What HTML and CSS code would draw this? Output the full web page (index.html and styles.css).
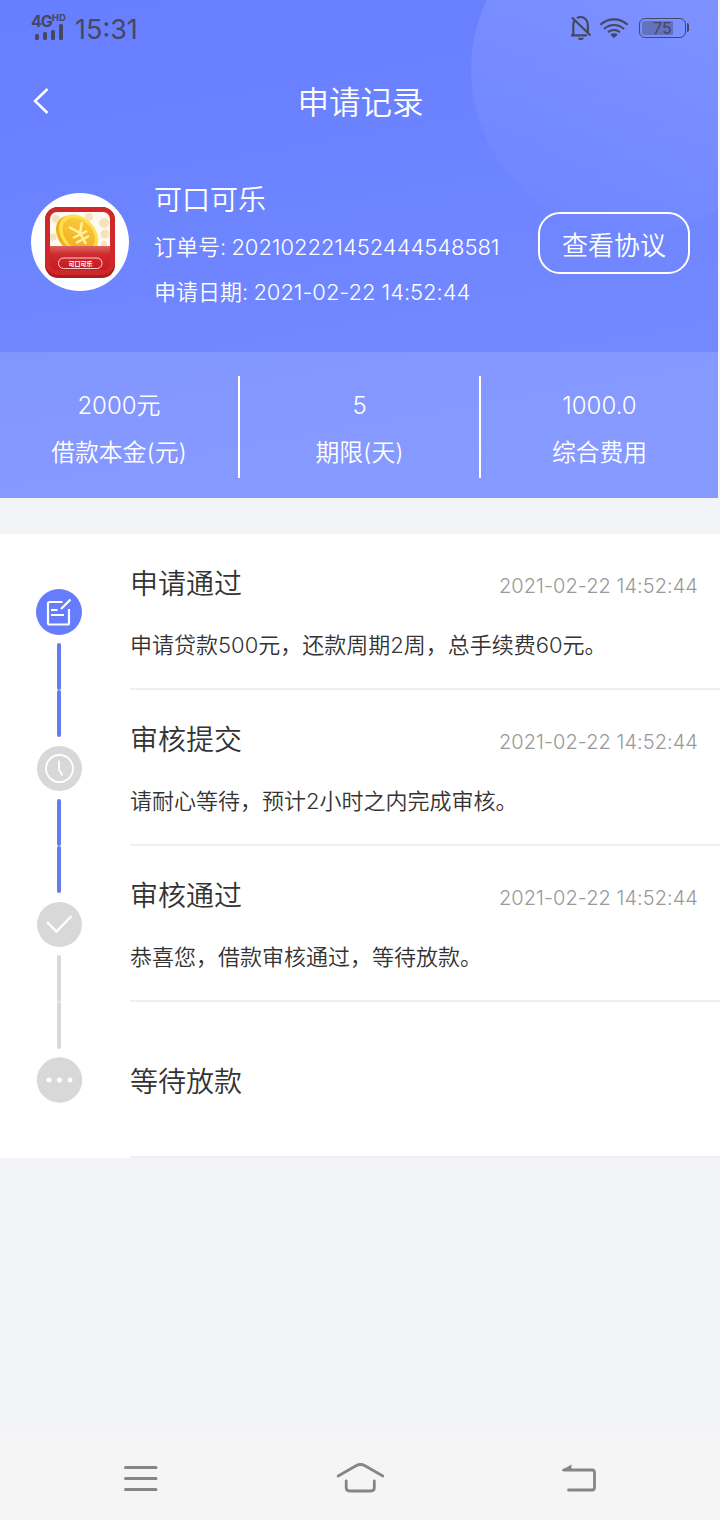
FILE: index.html
```html
<!DOCTYPE html>
<html lang="zh-CN">
  <head>
    <meta charset="UTF-8" />
    <meta name="viewport" content="width=device-width, initial-scale=1.0" />
    <title>申请记录</title>
    <link rel="stylesheet" href="styles.css">
  </head>
  <body>
    <header class="header">
      <!-- Status bar -->
      <div class="status-bar">
        <div class="signal">
          <div class="network">4G<sup>HD</sup></div>
          <svg width="30" height="16" viewBox="0 0 30 16" fill="#45485f">
            <rect x="1" y="10" width="4" height="6" rx="1.5" />
            <rect x="9" y="8" width="4" height="8" rx="1.5" />
            <rect x="17" y="6" width="4" height="10" rx="1.5" />
            <rect x="25" y="0" width="4" height="16" rx="1.5" />
          </svg>
        </div>
        <div class="clock">15:31</div>
        <div class="status-icons">
          <svg width="22" height="26" viewBox="0 0 22 26" fill="none" stroke="#45485f" stroke-width="2.200">
            <path d="M3.300 20V9.500c0-1.500.4-3 1.200-4.200M7 3C8 2.300 9.300 2 10.600 2c4 0 7.200 3.300 7.200 7.300v8.500M1 20.300h16M2 2.500l18.500 18" />
            <path d="M8 23.300h5.500l-1.300 1.200H9.300z" stroke-width="1" fill="#45485f" />
          </svg>
          <svg width="30" height="22" viewBox="0 0 30 22" fill="none" stroke="#45485f" stroke-width="2.100">
            <path d="M1.300 7.800c8-7.300 19.400-7.300 27.400 0M5 12c6-5.300 14-5.300 20 0M9 15.300c3.600-3 8.400-3 12 0" />
            <path d="M11.300 17.500c2-1.600 5.400-1.600 7.400 0L15 21.200z" fill="#45485f" stroke="none" />
          </svg>
          <div class="battery"><span>75</span></div>
        </div>
      </div>

      <!-- Title bar -->
      <div class="title-bar">
        <svg width="18" height="28" viewBox="0 0 18 28" fill="none" stroke="#fff" stroke-width="2.500">
          <path d="M16.500 2L4 14l12.500 12" />
        </svg>
        <h1>申请记录</h1>
      </div>

      <!-- Order -->
      <div class="order">
        <div class="logo">
          <svg width="70" height="71" viewBox="0 0 70 71">
            <defs>
              <linearGradient id="red" x1="0" y1="0" x2="0" y2="1">
                <stop offset="0" stop-color="#dc6360" />
                <stop offset=".35" stop-color="#cf2a2e" />
                <stop offset="1" stop-color="#c9191f" />
              </linearGradient>
              <linearGradient id="gold" x1="0" y1="0" x2="1" y2="1">
                <stop offset="0" stop-color="#f9cf3c" />
                <stop offset="1" stop-color="#f2a91c" />
              </linearGradient>
              <clipPath id="window">
                <path d="M5 39V12a7 7 0 0 1 7-7h46a7 7 0 0 1 7 7v27z" />
              </clipPath>
            </defs>
            <rect width="70" height="71" rx="13" fill="#a91c20" />
            <rect width="70" height="68" rx="13" fill="#d0272b" />
            <g clip-path="url(#window)">
              <rect x="5" y="5" width="60" height="34" fill="#fefaf1" />
              <g fill="#f6e2bd">
                <circle cx="11" cy="12" r="4" />
                <circle cx="8" cy="30" r="3.500" />
                <circle cx="44" cy="10" r="4" />
                <circle cx="59" cy="16" r="5" />
                <circle cx="60" cy="27" r="4.500" />
                <circle cx="59" cy="37" r="3" />
              </g>
              <g transform="rotate(46 33 28)">
                <ellipse cx="32" cy="30" rx="23" ry="16.500" fill="#f0b01c" />
                <ellipse cx="33" cy="27" rx="22.500" ry="16.500" fill="#ffdf4d" />
                <ellipse cx="33" cy="27" rx="18.500" ry="13.500" fill="url(#gold)" />
              </g>
              <path d="M24 20l11 6 2-11M35 26l6 11M28 31l14-7M31 36l13-7" fill="none" stroke="#fff2a0" stroke-width="2.500" />
            </g>
            <path d="M5 39h60v18a6 6 0 0 1-6 6H11a6 6 0 0 1-6-6z" fill="url(#red)" />
            <rect x="13.500" y="51" width="43.500" height="10.500" rx="5" fill="none" stroke="#fff" stroke-width=".8" />
            <text x="35.500" y="58.500" text-anchor="middle" class="logo-text">可口可乐</text>
          </svg>
        </div>
        <div class="order-info">
          <h2>可口可乐</h2>
          <p>订单号: <span class="order-no">202102221452444548581</span></p>
          <p>申请日期: <span class="order-date">2021-02-22 14:52:44</span></p>
        </div>
        <button class="agreement">查看协议</button>
      </div>

      <!-- Loan figures -->
      <div class="figures">
        <div class="figure">
          <strong>2000元</strong>
          <span>借款本金(元)</span>
        </div>
        <div class="figure">
          <strong>5</strong>
          <span>期限(天)</span>
        </div>
        <div class="figure">
          <strong>1000.0</strong>
          <span>综合费用</span>
        </div>
      </div>
    </header>

    <!-- Timeline -->
    <main class="timeline">
      <div class="step">
        <div class="marker">
          <svg width="46" height="46" viewBox="0 0 46 46" fill="none" stroke="#fff" stroke-width="2.200">
            <circle cx="23" cy="23" r="23" fill="#657dfc" stroke="none" />
            <path d="M26.500 13H13.500q-1.500 0-1.500 1.500V34q0 1.500 1.500 1.500H31.500q1.500 0 1.500-1.500V20M25 20l9.500-9.500M15 21h6.500M15 26h13" />
          </svg>
          <div class="line line-done"><i></i><i></i></div>
        </div>
        <div class="content">
          <div class="content-head">
            <h3>申请通过</h3>
            <time>2021-02-22 14:52:44</time>
          </div>
          <p>申请贷款500元，还款周期2周，总手续费60元。</p>
        </div>
      </div>
      <div class="step">
        <div class="marker">
          <svg width="46" height="46" viewBox="0 0 46 46" fill="none" stroke="#fff" stroke-width="1.800">
            <circle cx="23.500" cy="23.500" r="22.500" fill="#d8d8d8" stroke="none" />
            <circle cx="23.500" cy="23.500" r="13.500" />
            <path d="M23 15.500v9l3.500 6" />
          </svg>
          <div class="line line-done"><i></i><i></i></div>
        </div>
        <div class="content">
          <div class="content-head">
            <h3>审核提交</h3>
            <time>2021-02-22 14:52:44</time>
          </div>
          <p>请耐心等待，预计2小时之内完成审核。</p>
        </div>
      </div>
      <div class="step">
        <div class="marker">
          <svg width="46" height="46" viewBox="0 0 46 46" fill="none" stroke="#fff" stroke-width="2.400">
            <circle cx="23.500" cy="23.500" r="22.500" fill="#d8d8d8" stroke="none" />
            <path d="M11 21l9.500 9.500L35.500 15" />
          </svg>
          <div class="line"><i></i><i></i></div>
        </div>
        <div class="content">
          <div class="content-head">
            <h3>审核通过</h3>
            <time>2021-02-22 14:52:44</time>
          </div>
          <p>恭喜您，借款审核通过，等待放款。</p>
        </div>
      </div>
      <div class="step">
        <div class="marker">
          <svg width="46" height="46" viewBox="0 0 46 46" fill="#fff">
            <circle cx="23.500" cy="23" r="22.700" fill="#d8d8d8" />
            <circle cx="13" cy="23" r="2.500" />
            <circle cx="23.500" cy="23" r="2.500" />
            <circle cx="34" cy="23" r="2.500" />
          </svg>
        </div>
        <div class="content content-last">
          <h3>等待放款</h3>
        </div>
      </div>
    </main>

    <!-- System navigation -->
    <nav class="nav">
      <svg width="34" height="28" viewBox="0 0 34 28" fill="none" stroke="#868686" stroke-width="3" stroke-linecap="round">
        <path d="M1.500 3.500h30.500M1.500 14.500h30.500M1.500 25.500h30.500" />
      </svg>
      <svg width="48" height="32" viewBox="0 0 48 32" fill="none" stroke="#868686" stroke-width="2.800" stroke-linecap="round">
        <path d="M2.200 14L20 3.700q4.500-2.400 9 0L46.800 14M10.200 19V25.500q0 3.500 3.500 3.500h21.100q3.500 0 3.500-3.500V19" />
      </svg>
      <svg width="36" height="30" viewBox="0 0 36 30" fill="none" stroke="#868686" stroke-width="2.800" stroke-linecap="round">
        <path d="M3 7h28q2.500 0 2.500 2.500v15q0 2.500-2.500 2.500H7.500" />
        <path d="M1 7L10.500 1.500v6.500H1z" fill="#868686" stroke="none" />
      </svg>
    </nav>
  </body>
</html>
```

FILE: styles.css
```css
* {
  box-sizing: border-box;
  margin: 0;
  padding: 0;
}
body {
  width: 720px;
  height: 1520px;
  display: flex;
  flex-direction: column;
  background-color: #f2f4f8;
  color: #333;
  font-family: Inter, "Noto Sans CJK SC", sans-serif;
  font-weight: 350;
}
svg {
  display: block;
  flex-shrink: 0;
}
h1,
h2,
h3,
strong {
  font-weight: 350;
}

/* Header */
.header {
  position: relative;
  width: 718px;
  height: 498px;
  display: flex;
  flex-direction: column;
  overflow: hidden;
  background: linear-gradient(170deg, #677eff, #768dff);
  color: #fff;
}
/* decorative bubble in the corner */
.header::before {
  content: "";
  position: absolute;
  left: 471px;
  top: -93px;
  width: 326px;
  height: 326px;
  border-radius: 50%;
  background: linear-gradient(195deg, rgba(255, 255, 255, 0.14) 25%, rgba(255, 255, 255, 0) 95%);
}
.status-bar {
  position: relative;
  height: 56px;
  padding: 0 30px 0 31px;
  display: flex;
  color: #45485f;
}
.signal {
  width: 44px;
  padding-top: 13px;
}
.signal svg {
  margin: -4px 0 0 3px;
}
.network {
  display: flex;
  height: 15px;
  font-size: 16px;
  line-height: 16px;
  font-weight: 700;
  letter-spacing: -1px;
}
.network sup {
  font-size: 9.5px;
  line-height: 10px;
  letter-spacing: 0;
}
.clock {
  font-size: 27px;
  line-height: 60px;
  font-weight: 400;
}
.status-icons {
  display: flex;
  align-items: center;
  gap: 7px;
  margin-left: auto;
}
.battery {
  position: relative;
  width: 47px;
  height: 20px;
  margin: 0 2px 0 3px;
  padding: 2px;
  border: 1.5px solid #45485f;
  border-radius: 6px;
}
.battery::after {
  content: "";
  position: absolute;
  right: -4px;
  top: 4px;
  width: 2px;
  height: 9px;
  border-radius: 0 2px 2px 0;
  background-color: #45485f;
}
.battery span {
  display: block;
  width: 31px;
  height: 14px;
  padding-left: 11px;
  border-radius: 3px 0 0 3px;
  background-color: #6471bd;
  font-size: 16px;
  line-height: 14px;
  font-weight: 400;
}
.title-bar {
  height: 90px;
  display: flex;
  align-items: center;
  padding-left: 31px;
}
.title-bar h1 {
  flex: 1;
  margin: -2px 46px 0 0;
  text-align: center;
  font-size: 31.5px;
}
.order {
  position: relative;
  height: 206px;
  padding: 32px 28px 0 31px;
  display: flex;
}
.logo {
  width: 98px;
  height: 98px;
  margin-top: 15px;
  border-radius: 50%;
  background-color: #fff;
  display: flex;
  align-items: center;
  justify-content: center;
}
.logo-text {
  font-family: "Noto Sans CJK SC", sans-serif;
  font-size: 6px;
  font-weight: 700;
  fill: #fff;
}
.order-info {
  padding-top: 1px;
  margin-left: 25px;
}
.order-info h2 {
  font-size: 28px;
  line-height: 43px;
}
.order-info p {
  margin-top: 4px;
  font-size: 22px;
  line-height: 41px;
  white-space: nowrap;
}
.order-info h2 + p {
  padding-top: 1px;
}
.order-no,
.order-date {
  margin-left: -1px;
  letter-spacing: -0.05px;
}
.agreement {
  width: 152px;
  height: 62px;
  margin: 34px 0 0 auto;
  border: 2px solid #fff;
  border-radius: 22px;
  background: none;
  color: #fff;
  font: inherit;
  font-size: 26px;
}
.figures {
  height: 146px;
  padding-top: 24px;
  display: grid;
  grid-template-columns: 238px 241px 239px;
  background-color: rgba(255, 255, 255, 0.13);
}
.figure {
  height: 102px;
  padding-top: 10px;
  display: flex;
  flex-direction: column;
  gap: 7px;
  text-align: center;
  font-size: 24px;
  line-height: 40px;
}
.figure span {
  font-size: 23.8px;
}
.figure + .figure {
  border-left: 2px solid #fff;
}

/* Timeline */
.timeline {
  height: 624px;
  margin-top: 36px;
  background-color: #fff;
}
.step {
  height: 156px;
  display: flex;
}
.marker {
  width: 130px;
  padding: 55px 0 0 36px;
}
.line {
  position: relative;
  z-index: 1;
  width: 4px;
  margin: 8px 0 0 21px;
  color: #d8d8d8;
}
.line-done {
  color: #657dec;
}
.line i {
  display: block;
  height: 47px;
  border-radius: 2px;
  background-color: currentColor;
}
.content {
  flex: 1;
  border-bottom: 2px solid #efefef;
}
.content-head {
  height: 84px;
  padding: 11px 22px 0 0;
  display: flex;
  align-items: center;
  justify-content: space-between;
}
.content h3 {
  font-size: 28px;
}
.content time {
  padding-top: 8px;
  color: #999;
  font-size: 20px;
  letter-spacing: 0.05px;
}
.content p {
  font-size: 22px;
  line-height: 54px;
}
.content-last {
  padding-top: 58px;
}

/* System navigation */
.nav {
  height: 84px;
  margin-top: auto;
  padding: 0 123px 0 124px;
  display: flex;
  align-items: center;
  justify-content: space-between;
  background-color: #f5f5f5;
}
```
